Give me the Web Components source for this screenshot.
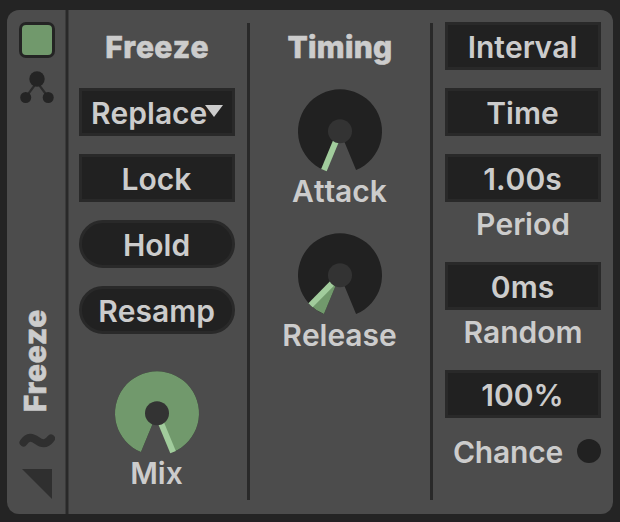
<!DOCTYPE html>
<html lang="en">
<head>
<meta charset="utf-8">
<title>Freeze</title>
<style>
	body {
		margin: 0;
		background: #242424;
		color: #cccccc;
		font: 600 30px/36px Inter, sans-serif;
		font-kerning: none;
		overflow: hidden;
	}
</style>
</head>
<body>
<fx-module name="Freeze">
	<fx-column>
		<fx-title>Freeze</fx-title>
		<fx-field menu>Replace</fx-field>
		<fx-field>Lock</fx-field>
		<fx-field round>Hold</fx-field>
		<fx-field round>Resamp</fx-field>
		<fx-knob value="1" style="margin-top: 18px">Mix</fx-knob>
	</fx-column>
	<fx-column wide>
		<fx-title>Timing</fx-title>
		<fx-knob value="0">Attack</fx-knob>
		<fx-knob value="0.07">Release</fx-knob>
	</fx-column>
	<fx-column>
		<fx-field>Interval</fx-field>
		<fx-field>Time</fx-field>
		<fx-field label="Period">1.00s</fx-field>
		<fx-field label="Random">0ms</fx-field>
		<fx-field>100%</fx-field>
		<fx-lamp>Chance</fx-lamp>
	</fx-column>
</fx-module>

<script>
class FxModule extends HTMLElement {
	constructor() {
		super();
		this.attachShadow({ mode: 'open' });
		this.shadowRoot.innerHTML = `
      <style>
        :host {
          display: block;
          box-sizing: border-box;
          height: 522px;
          padding: 10px 7px 0;
          border-bottom: 2px solid #241f23;
        }

        #panel {
          display: flex;
          height: 504px;
          border-radius: 12px;
          background: #4c4c4c;
        }

        aside {
          box-sizing: border-box;
          flex: none;
          width: 62px;
          padding: 12px 0 15px 12px;
          background: linear-gradient(to right, #3b3b3b 1px, #292929 1px 3px, #3b3b3b 3px) right / 4px 100% no-repeat;
          display: flex;
          flex-direction: column;
        }

        #power {
          box-sizing: border-box;
          width: 36px;
          height: 36px;
          border: 3px solid #242424;
          border-radius: 7px;
          background: #71996c;
        }

        svg {
          display: block;
          flex: none;
        }

        #name {
          margin-top: auto;
          width: 36px;
          writing-mode: vertical-rl;
          transform: rotate(180deg);
          font-weight: 800;
          letter-spacing: 0.7px;
          line-height: 33px;
          -webkit-text-stroke: 0.6px;
        }

        #columns {
          display: flex;
          box-sizing: border-box;
          padding: 12px 0 14px;
        }
      </style>
      <div id="panel">
        <aside>
          <div id="power"></div>
          <svg width="36" height="34" style="margin-top: 12px" viewBox="0 0 36 34" fill="#242424">
            <path d="M7 27 18 12 29 27" fill="none" stroke="#2b2b2b" stroke-width="2.2"/>
            <circle cx="18" cy="9" r="7.7"/>
            <circle cx="6.7" cy="27.5" r="5.5"/>
            <circle cx="29.2" cy="27.5" r="5.5"/>
          </svg>
          <div id="name"></div>
          <svg width="36" height="18" style="margin-top: 20px" viewBox="0 0 36 18">
            <path d="M4.500 10.500C9 4 13 4.800 18 8.500S27.500 12.500 32 6.500" fill="none" stroke="#2f2f2f" stroke-width="8" stroke-linecap="round"/>
          </svg>
          <svg width="36" height="30" style="margin-top: 19px" viewBox="0 0 36 30">
            <path d="M3 0H33V30Z" fill="#2f2f2f"/>
          </svg>
        </aside>
        <div id="columns"><slot></slot></div>
      </div>
    `;
		this.shadowRoot.getElementById('name').textContent = this.getAttribute('name');
	}
}

class FxColumn extends HTMLElement {
	constructor() {
		super();
		this.attachShadow({ mode: 'open' });
		this.shadowRoot.innerHTML = `
      <style>
        :host {
          display: flex;
          flex-direction: column;
          align-items: center;
          gap: 18px;
          box-sizing: border-box;
          flex: none;
          width: 178px;
          padding: 0 12px 0 10px;
          position: relative;
        }

        :host([wide]) {
          width: 183px;
          padding: 0 0 0 3px;
        }

        :host(:not(:last-child))::after {
          content: '';
          position: absolute;
          top: 1px;
          right: -3px;
          bottom: 0;
          width: 3px;
          background: #292929;
        }

        :host(:last-child) {
          width: 183px;
          padding: 0 12px 0 15px;
        }
      </style>
      <slot></slot>
    `;
	}
}

class FxTitle extends HTMLElement {
	constructor() {
		super();
		this.attachShadow({ mode: 'open' });
		this.shadowRoot.innerHTML = `
      <style>
        :host {
          display: block;
          height: 48px;
          line-height: 50px;
          font-weight: 800;
          letter-spacing: 0.3px;
          -webkit-text-stroke: 0.6px;
        }
      </style>
      <slot></slot>
    `;
	}
}

class FxField extends HTMLElement {
	constructor() {
		super();
		this.attachShadow({ mode: 'open' });
		this.shadowRoot.innerHTML = `
      <style>
        :host {
          display: flex;
          flex-direction: column;
          align-items: center;
        }

        #box {
          box-sizing: border-box;
          width: 156px;
          height: 48px;
          border: 3px solid #292929;
          background: #212121;
          display: flex;
          align-items: center;
          justify-content: center;
          padding: 2px 1px 0 0;
        }

        :host([round]) #box {
          border-radius: 24px;
        }

        :host([menu]) #box {
          justify-content: flex-start;
          padding-left: 9px;
        }

        #arrow {
          display: none;
          flex: none;
          margin: -4px 0 0 -2px;
        }

        :host([menu]) #arrow {
          display: block;
        }

        #label {
          height: 42px;
          line-height: 45px;
        }

        #label:empty {
          display: none;
        }
      </style>
      <div id="box">
        <slot></slot>
        <svg id="arrow" width="18" height="12"><path d="M0 0H18L9 12Z" fill="#cccccc"/></svg>
      </div>
      <div id="label"></div>
    `;
		this.shadowRoot.getElementById('label').textContent = this.getAttribute('label') || '';
	}
}

// The dial sweeps 315 degrees, starting 22.5 degrees left of straight down.
class FxKnob extends HTMLElement {
	constructor() {
		super();
		this.attachShadow({ mode: 'open' });
		const value = Number(this.getAttribute('value'));
		const end = 22.5 + value * 315;
		this.shadowRoot.innerHTML = `
      <style>
        :host {
          display: flex;
          flex-direction: column;
          align-items: center;
          height: 126px;
        }

        svg {
          display: block;
          margin-top: 1px;
          overflow: visible;
        }

        #label {
          line-height: 36px;
          padding-right: 1px;
        }
      </style>
      <svg width="84" height="84" viewBox="-42 -42.300 84 84">
        <path d="${this.#sector(22.5, 337.5)}" fill="#212121"/>
        <path d="${this.#sector(22.5, end)}" fill="#71996c"/>
        <path d="M0 0V42" stroke="#a1cc9c" stroke-width="6" transform="rotate(${end})"/>
        <circle r="12" fill="#333333"/>
      </svg>
      <div id="label"><slot></slot></div>
    `;
	}

	#point(deg) {
		const a = (deg * Math.PI) / 180;
		return `${-42 * Math.sin(a)} ${42 * Math.cos(a)}`;
	}

	#sector(from, to) {
		const large = to - from > 180 ? 1 : 0;
		return `M0 0L${this.#point(from)}A42 42 0 ${large} 1 ${this.#point(to)}Z`;
	}
}

class FxLamp extends HTMLElement {
	constructor() {
		super();
		this.attachShadow({ mode: 'open' });
		this.shadowRoot.innerHTML = `
      <style>
        :host {
          display: flex;
          align-items: center;
          justify-content: flex-end;
          gap: 14px;
          width: 156px;
          height: 36px;
          margin-top: -2px;
          letter-spacing: -0.2px;
        }

        #lamp {
          width: 24px;
          height: 24px;
          border-radius: 50%;
          background: #212121;
          margin-top: -2px;
        }
      </style>
      <slot></slot>
      <div id="lamp"></div>
    `;
	}
}

customElements.define('fx-module', FxModule);
customElements.define('fx-column', FxColumn);
customElements.define('fx-title', FxTitle);
customElements.define('fx-field', FxField);
customElements.define('fx-knob', FxKnob);
customElements.define('fx-lamp', FxLamp);
</script>
</body>
</html>
